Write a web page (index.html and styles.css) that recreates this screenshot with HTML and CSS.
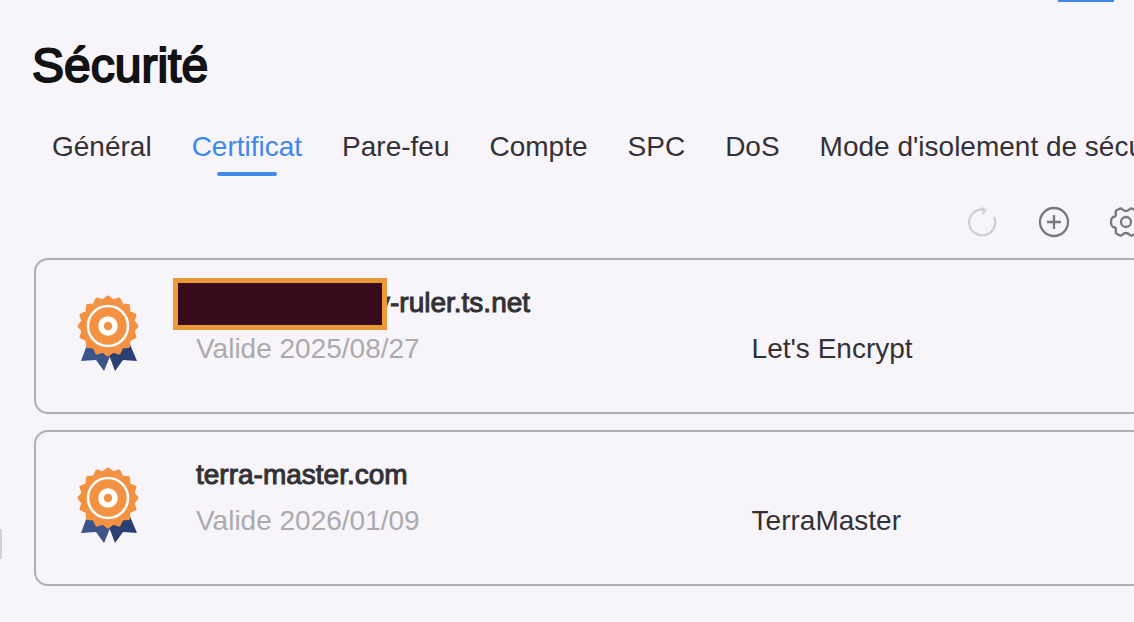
FILE: index.html
```html
<!DOCTYPE html>
<html lang="fr">
<head>
    <meta charset="utf-8">
    <title>Sécurité</title>
    <link rel="stylesheet" href="styles.css">
</head>
<body>
    <svg class="sprite" aria-hidden="true">
        <symbol id="medal" viewBox="0 0 64 80">
            <path fill="#3d5488" d="M12 48 5 67l15-1 8 11 7-17z"/>
            <path fill="#2a3f73" d="M53 48l8 19-14-1-8 11-6-16z"/>
            <path class="medal-body" transform="translate(32 32)" d="M0-29 5-25 11-27 14-21 20.500-20.500 21-14 27-11 25-5 29 0 25 5 27 11 21 14 20.500 20.500 14 21 11 27 5 25 0 29-5 25-11 27-14 21-20.500 20.500-21 14-27 11-25 5-29 0-25-5-27-11-21-14-20.500-20.500-14-21-11-27-5-25z"/>
            <circle cx="32" cy="32" r="20" fill="none" stroke="#fff" stroke-width="2.5"/>
            <circle cx="32" cy="32" r="7" fill="none" stroke="#fff" stroke-width="5.5"/>
        </symbol>
    </svg>
    <div class="topbar"><span class="topbar-mark"></span></div>
    <span class="handle"></span>
    <main class="panel">
        <h1>Sécurité</h1>
        <nav class="tabs">
            <a href="#general">Général</a>
            <a href="#certificat" class="active">Certificat</a>
            <a href="#pare-feu">Pare-feu</a>
            <a href="#compte">Compte</a>
            <a href="#spc">SPC</a>
            <a href="#dos">DoS</a>
            <a href="#isolement">Mode d'isolement de sécurité</a>
        </nav>
        <div class="toolbar">
            <button type="button" aria-label="Actualiser" disabled>
                <svg viewBox="0 0 32 32"><path d="M28 11A13 13 0 1 1 18 3.500M15 2l4 2-2 4"/></svg>
            </button>
            <button type="button" aria-label="Ajouter">
                <svg viewBox="0 0 32 32"><circle cx="16" cy="16" r="14"/><path d="M16 9v14M9 16h14"/></svg>
            </button>
            <button type="button" aria-label="Paramètres">
                <svg viewBox="0 0 32 32"><path d="M12 3q-1-1-3 0L7 4q-2 1-1 4 0 3-3 3-2 1-2 5t2 5q3 0 3 3-1 3 1 4l2 1q2 1 3 0 4-4 8 0 1 1 3 0l2-1q2-1 1-4 0-3 3-3 2-1 2-5t-2-5q-3 0-3-3 1-3-1-4l-2-1q-2-1-3 0-4 4-8 0z"/><circle cx="16" cy="16" r="5"/></svg>
            </button>
        </div>
        <ul class="certs">
            <li class="cert">
                <svg class="cert-icon" aria-hidden="true"><use href="#medal"/></svg>
                <div class="cert-name">
                    <h2 class="masked">y-ruler.ts.net</h2>
                    <p>Valide 2025/08/27</p>
                </div>
                <div class="cert-issuer">Let's Encrypt</div>
            </li>
            <li class="cert">
                <svg class="cert-icon" aria-hidden="true"><use href="#medal"/></svg>
                <div class="cert-name">
                    <h2>terra-master.com</h2>
                    <p>Valide 2026/01/09</p>
                </div>
                <div class="cert-issuer">TerraMaster</div>
            </li>
        </ul>
    </main>
</body>
</html>
```

FILE: styles.css
```css
*, *::before, *::after {
    box-sizing: border-box;
}

body {
    margin: 0;
    background: #f7f5f9;
    color: #333135;
    font-family: "Liberation Sans", Arial, sans-serif;
    font-size: 28px;
    line-height: 32px;
    overflow: hidden;
}

h1, h2, p, ul {
    margin: 0;
    padding: 0;
}

.sprite {
    position: absolute;
    width: 0;
    height: 0;
}

.topbar {
    display: flex;
    justify-content: flex-end;
    height: 2px;
    padding-right: 20px;
}

.topbar-mark {
    width: 56px;
    background: #4088ec;
}

/* sidebar handle on the window edge */
.handle {
    position: absolute;
    top: 529px;
    left: 0;
    width: 2px;
    height: 30px;
    background: #d3d1d5;
}

/* runs past the right edge of the window */
.panel {
    margin: 0 -24px 0 34px;
    padding-top: 36px;
}

h1 {
    margin-left: -2px;
    color: #121114;
    font-size: 48px;
    font-weight: normal;
    line-height: 56px;
    -webkit-text-stroke: 2px;
}

.tabs {
    display: flex;
    gap: 40px;
    padding: 37px 0 0 18px;
    white-space: nowrap;
}

.tabs a {
    color: inherit;
    text-decoration: none;
}

.tabs .active {
    color: #4088ec;
}

.tabs .active::after {
    content: "";
    display: block;
    width: 60px;
    height: 4px;
    margin: 9px auto 0;
    border-radius: 2px;
    background: #4088ec;
}

.toolbar {
    display: flex;
    justify-content: flex-end;
    gap: 40px;
    padding: 30px 16px 20px 0;
}

.toolbar button {
    width: 32px;
    height: 32px;
    padding: 0;
    border: 0;
    background: none;
    color: #7a787b;
}

.toolbar button:disabled {
    color: #d0ced2;
}

.toolbar svg {
    display: block;
    fill: none;
    stroke: currentColor;
    stroke-width: 2.3;
}

.certs {
    display: grid;
    gap: 16px;
    list-style: none;
}

.cert {
    display: grid;
    grid-template-columns: 120px 3fr 2fr;
    height: 156px;
    padding: 27px 34px 0 40px;
    border: 2px solid #b0aeb2;
    border-radius: 14px;
}

.cert-icon {
    width: 64px;
    height: 80px;
    margin-top: 7px;
}

.medal-body {
    fill: #f39243;
    stroke: #f39243;
    stroke-width: 3;
    stroke-linejoin: round;
}

.cert h2 {
    font-size: 28px;
    font-weight: normal;
    line-height: 32px;
    -webkit-text-stroke: 1px;
}

.cert p {
    margin-top: 14px;
    color: #acaaae;
}

.cert-issuer {
    margin-top: 46px;
}

/* first part of the host name is hidden */
.masked {
    position: relative;
}

.cert .masked {
    padding-left: 180px;
}

.masked::before {
    content: "";
    position: absolute;
    top: -9px;
    left: -23px;
    width: 214px;
    height: 52px;
    border: 5px solid #ec9a35;
    background: #360b1b;
}
```
